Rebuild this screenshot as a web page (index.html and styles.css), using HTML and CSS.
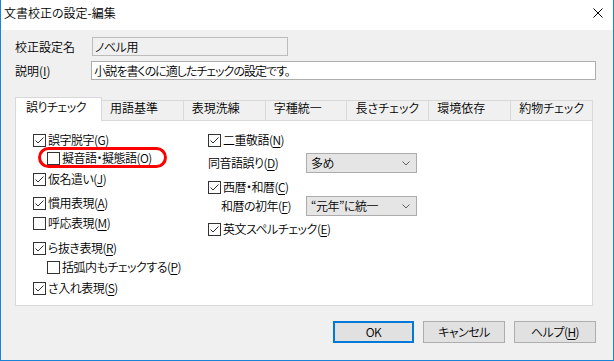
FILE: index.html
```html
<!DOCTYPE html>
<html lang="ja">
<head>
    <meta charset="UTF-8">
    <title>文書校正の設定-編集</title>
    <link rel="stylesheet" href="styles.css">
</head>
<body>
    <div class="window">
        <div class="titlebar">
            <span class="title">文書校正の設定-編集</span>
            <svg class="close" width="10" height="10" viewBox="0 0 10 10">
                <path d="M0.5 0.5 L9.5 9.5 M9.5 0.5 L0.5 9.5" stroke="#000" stroke-width="1" fill="none"/>
            </svg>
        </div>
        <div class="body">
            <div class="field">
                <span class="field-label">校正設定名</span>
                <div class="textbox name">ノベル用</div>
            </div>
            <div class="field second">
                <span class="field-label">説明(<u>I</u>)</span>
                <div class="textbox desc">小説を書くのに適したチェックの設定です。</div>
            </div>

            <div class="tabs">
                <div class="tab active">誤りチェック</div>
                <div class="tab">用語基準</div>
                <div class="tab">表現洗練</div>
                <div class="tab">字種統一</div>
                <div class="tab">長さチェック</div>
                <div class="tab">環境依存</div>
                <div class="tab">約物チェック</div>
            </div>
            <div class="panel">
                <div class="col col-left">
                    <div class="check"><span class="box on"><svg viewBox="0 0 11 11"><path d="M1.5 5.5 L4 8 L9.5 2.5"/></svg></span>誤字脱字(<u>G</u>)</div>
                    <div class="check sub marked"><span class="box"></span>擬音語・擬態語(<u>O</u>)<span class="mark"></span></div>
                    <div class="check sp3"><span class="box on"><svg viewBox="0 0 11 11"><path d="M1.5 5.5 L4 8 L9.5 2.5"/></svg></span>仮名遣い(<u>J</u>)</div>
                    <div class="check sp6"><span class="box on"><svg viewBox="0 0 11 11"><path d="M1.5 5.5 L4 8 L9.5 2.5"/></svg></span>慣用表現(<u>A</u>)</div>
                    <div class="check sp2"><span class="box"></span>呼応表現(<u>M</u>)</div>
                    <div class="check sp7"><span class="box on"><svg viewBox="0 0 11 11"><path d="M1.5 5.5 L4 8 L9.5 2.5"/></svg></span>ら抜き表現(<u>R</u>)</div>
                    <div class="check sub sp1"><span class="box"></span>括弧内もチェックする(<u>P</u>)</div>
                    <div class="check sp3"><span class="box on"><svg viewBox="0 0 11 11"><path d="M1.5 5.5 L4 8 L9.5 2.5"/></svg></span>さ入れ表現(<u>S</u>)</div>
                </div>
                <div class="col col-right">
                    <div class="check"><span class="box on"><svg viewBox="0 0 11 11"><path d="M1.5 5.5 L4 8 L9.5 2.5"/></svg></span>二重敬語(<u>N</u>)</div>
                    <div class="combo-row sp4">
                        <span class="combo-label">同音語誤り(<u>D</u>)</span>
                        <div class="select">多め<svg width="8" height="5" viewBox="0 0 8 5"><path d="M0.5 0.5 L4 4 L7.5 0.5" stroke="#606060" fill="none"/></svg></div>
                    </div>
                    <div class="check sp5"><span class="box on"><svg viewBox="0 0 11 11"><path d="M1.5 5.5 L4 8 L9.5 2.5"/></svg></span>西暦・和暦(<u>C</u>)</div>
                    <div class="combo-row indent">
                        <span class="combo-label">和暦の初年(<u>F</u>)</span>
                        <div class="select">“元年”に統一<svg width="8" height="5" viewBox="0 0 8 5"><path d="M0.5 0.5 L4 4 L7.5 0.5" stroke="#606060" fill="none"/></svg></div>
                    </div>
                    <div class="check sp4"><span class="box on"><svg viewBox="0 0 11 11"><path d="M1.5 5.5 L4 8 L9.5 2.5"/></svg></span>英文スペルチェック(<u>E</u>)</div>
                </div>
            </div>

            <div class="buttons">
                <button class="btn default">OK</button>
                <button class="btn">キャンセル</button>
                <button class="btn">ヘルプ(<u>H</u>)</button>
            </div>
        </div>
    </div>
</body>
</html>
```

FILE: styles.css
```css
* {
    box-sizing: border-box;
}
body {
    margin: 0;
    font-family: "Noto Sans CJK JP", "Noto Sans", sans-serif;
    font-size: 12px;
    font-weight: 350;
    font-feature-settings: "palt";
    letter-spacing: -0.5px;
    color: #000;
}
u {
    text-decoration-thickness: 1px;
    text-underline-offset: 2px;
}
.window {
    width: 614px;
    height: 361px;
    border: 1px solid #1883d7;
    border-top: 0;
    background-color: #f0f0f0;
}
.titlebar {
    height: 30px;
    background-color: #fff;
    display: flex;
    align-items: center;
    justify-content: space-between;
    padding: 0 10px 4px 3px;
}
.title {
    line-height: 16px;
    letter-spacing: 0;
}
.body {
    padding: 7px 17px 0 14px;
}
.field {
    display: flex;
    align-items: center;
    height: 19px;
}
.field.second {
    margin-top: 5px;
}
.field-label {
    width: 77px;
    line-height: 16px;
    letter-spacing: 0;
}
.textbox {
    height: 19px;
    border: 1px solid #adadad;
    background-color: #fff;
    padding: 0 2px;
    line-height: 17px;
    white-space: nowrap;
}
.textbox.name {
    width: 196px;
    background-color: #f0f0f0;
    border-color: #bcbcbc;
}
.textbox.desc {
    width: 509px;
    letter-spacing: -1px;
}

/* tabs */
.tabs {
    display: flex;
    align-items: flex-end;
    width: 578px;
    height: 23px;
    margin-top: 17px;
}
.tab {
    flex: 1;
    height: 20px;
    border: 1px solid #d9d9d9;
    border-left: 0;
    border-bottom: 0;
    background-color: #f0f0f0;
    padding-left: 8px;
    line-height: 14px;
    white-space: nowrap;
    letter-spacing: 0;
}
.tab.active {
    flex: 0 0 87px;
    height: 24px;
    margin-bottom: -1px;
    border-left: 1px solid #d9d9d9;
    background-color: #fff;
    padding: 2px 0 0 10px;
    position: relative;
    z-index: 1;
    letter-spacing: -0.5px;
}
.panel {
    width: 578px;
    height: 186px;
    background-color: #fff;
    border: 1px solid #d9d9d9;
    display: flex;
    padding: 10px 0 0 17px;
}
.col-left {
    width: 175px;
}
.check {
    display: flex;
    align-items: center;
    height: 18px;
    line-height: 16px;
    white-space: nowrap;
}
.check.sub {
    padding-left: 14px;
}
.marked {
    position: relative;
}
.mark {
    position: absolute;
    left: 5px;
    top: -2px;
    width: 129px;
    height: 21px;
    border: 3px solid #f00;
    border-radius: 11px;
}
.box {
    flex: none;
    width: 13px;
    height: 13px;
    border: 1px solid #333;
    background-color: #fff;
    margin-right: 2px;
}
.box svg {
    display: block;
    width: 11px;
    height: 11px;
}
.box svg path {
    fill: none;
    stroke: #333;
    stroke-width: 1;
}
.sp1 { margin-top: 1px; }
.sp2 { margin-top: 2px; }
.sp3 { margin-top: 3px; }
.sp4 { margin-top: 4px; }
.sp5 { margin-top: 5px; }
.sp6 { margin-top: 6px; }
.sp7 { margin-top: 7px; }

.combo-row {
    display: flex;
    align-items: center;
    height: 20px;
}
.combo-label {
    width: 98px;
    line-height: 16px;
    white-space: nowrap;
}
.combo-row.indent {
    padding-left: 13px;
}
.combo-row.indent .combo-label {
    width: 85px;
}
.select {
    width: 111px;
    height: 20px;
    border: 1px solid #acacac;
    background-color: #e5e5e5;
    display: flex;
    align-items: center;
    justify-content: space-between;
    padding: 0 6px 0 4px;
    line-height: 16px;
    white-space: nowrap;
}

/* buttons */
.buttons {
    display: flex;
    justify-content: flex-end;
    gap: 9px;
    margin-top: 15px;
}
.btn {
    width: 82px;
    height: 22px;
    border: 1px solid #adadad;
    background-color: #e1e1e1;
    font-family: inherit;
    font-size: 12px;
    font-weight: 350;
    font-feature-settings: "palt";
    letter-spacing: -0.5px;
    line-height: 16px;
    padding: 0;
    color: #000;
}
.btn.default {
    width: 81px;
    border: 2px solid #0078d7;
}
```
